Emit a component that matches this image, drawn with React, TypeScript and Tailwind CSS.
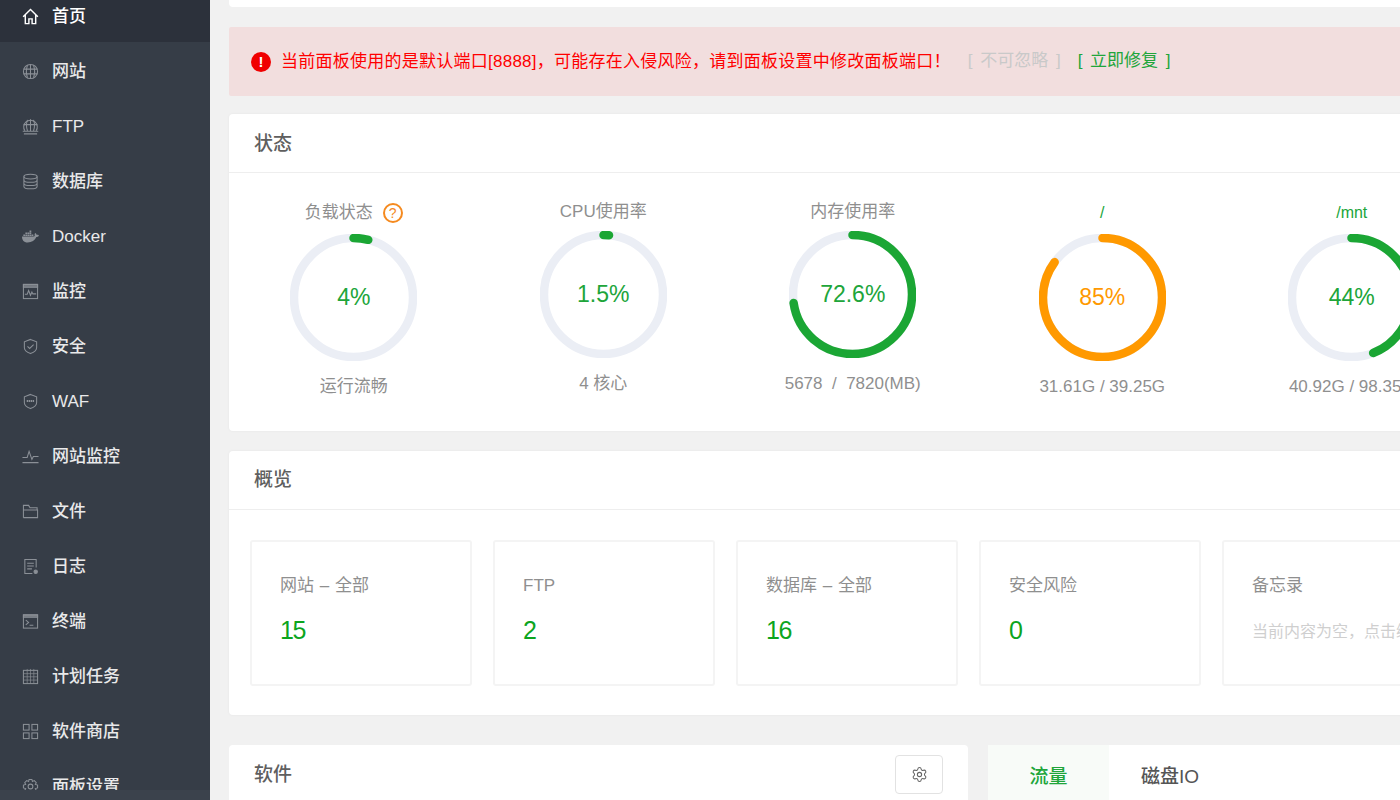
import { Settings } from "lucide-react";
import { FaDocker } from "react-icons/fa";
import type { ReactNode } from "react";

const Ico = ({ children }: { children: ReactNode }) => (
  <svg viewBox="0 0 18 18" fill="none" stroke="currentColor" strokeWidth="1.1" className="w-[17px] h-[17px] shrink-0">
    {children}
  </svg>
);

const navItems: { label: string; icon: ReactNode; active?: boolean }[] = [
  {
    label: "首页",
    active: true,
    icon: <path strokeWidth="1.5" d="M1.200 9.200 9 1.500l7.800 7.700M3.500 7.500V16.500h3.800v-5h3.400v5h3.800V7.500" />,
  },
  {
    label: "网站",
    icon: (
      <>
        <circle cx="9" cy="9" r="7.500" />
        <path d="M1.500 6.500h15M1.500 11.500h15M9 1.500v15M5.800 2.500c-1.500 4-1.500 9 0 13M12.200 2.500c1.500 4 1.500 9 0 13" />
      </>
    ),
  },
  {
    label: "FTP",
    icon: (
      <>
        <path d="M3 13.500a7.200 7.200 0 1 1 12 0" />
        <path d="M1.800 7h14.400M9 1.200v12.300M5.800 2c-1.300 3.500-1.300 8 0 11.500M12.200 2c1.300 3.500 1.300 8 0 11.500M.8 14h16.400M2 16.800h14" />
      </>
    ),
  },
  {
    label: "数据库",
    icon: (
      <>
        <ellipse cx="9" cy="3.800" rx="7" ry="2.500" />
        <path d="M2 3.800v10.400c0 1.400 3.100 2.500 7 2.500s7-1.100 7-2.500V3.800M2 7.300c0 1.400 3.100 2.500 7 2.500s7-1.100 7-2.500M2 10.800c0 1.400 3.100 2.500 7 2.500s7-1.100 7-2.500" />
      </>
    ),
  },
  { label: "Docker", icon: <FaDocker className="w-[17px] h-[17px] shrink-0" /> },
  {
    label: "监控",
    icon: (
      <>
        <rect x="1.500" y="1.500" width="15" height="15" />
        <rect x="1.500" y="1.500" width="15" height="3" fill="currentColor" fillOpacity=".7" />
        <path d="M3 12h2.500l1.500-4 2 5 1.500-3.500 1 2H15" />
      </>
    ),
  },
  {
    label: "安全",
    icon: (
      <>
        <path d="M9 1.500 15.500 4v6c0 3-3 5.200-6.500 6.500C5.500 15.200 2.500 13 2.500 10V4z" />
        <path d="m5.800 8.800 2.300 2.300 4.200-4" />
      </>
    ),
  },
  {
    label: "WAF",
    icon: (
      <>
        <path d="M9 1.500 15.500 4v6c0 3-3 5.200-6.500 6.500C5.500 15.200 2.500 13 2.500 10V4z" />
        <path d="M5 8.500h8" strokeWidth="2.200" strokeDasharray="1.500 .6" />
      </>
    ),
  },
  {
    label: "网站监控",
    icon: <path d="M.5 10h5l2-6.500 3 8.500 1.500-3h5.500M.5 15.500h17" />,
  },
  {
    label: "文件",
    icon: <path d="M1.500 15.500V2.500h5.500l1.500 2.500h7.500v2.500M1.500 15.500h15V7.500h-15" />,
  },
  {
    label: "日志",
    icon: (
      <>
        <path d="M15 10V1.500H3v15h8" />
        <path d="M5.500 5.500h7M5.500 8.500h7M5.500 11.500h5" />
        <circle cx="14.500" cy="14.500" r="1.800" fill="currentColor" />
      </>
    ),
  },
  {
    label: "终端",
    icon: (
      <>
        <rect x="1.500" y="2" width="15" height="14" />
        <rect x="1.500" y="2" width="15" height="2.500" fill="currentColor" fillOpacity=".7" />
        <path d="m4 7.500 3 2.500-3 2.500M8 13h4" />
      </>
    ),
  },
  {
    label: "计划任务",
    icon: (
      <>
        <rect x="1.500" y="2.500" width="15" height="14" />
        <path d="M1.500 6h15M1.500 9.300h15M1.500 12.800h15M5.500 1v15.500M9 1v15.500M12.500 1v15.500" strokeWidth=".7" />
      </>
    ),
  },
  {
    label: "软件商店",
    icon: (
      <>
        <rect x="1.500" y="1.500" width="6" height="6" />
        <rect x="10.500" y="1.500" width="6" height="6" />
        <rect x="1.500" y="10.500" width="6" height="6" />
        <rect x="10.500" y="10.500" width="6" height="6" />
      </>
    ),
  },
  {
    label: "面板设置",
    icon: (
      <>
        <path d="M7.500 1.500h3l.5 2.200 2-.9 2.100 2.100-1 2 2.400.6v3l-2.400.6 1 2-2.100 2.100-2-1-.5 2.300h-3l-.5-2.300-2 1-2.100-2.100 1-2-2.400-.6v-3l2.400-.6-1-2L5 2.800l2 .9z" />
        <circle cx="9" cy="9" r="2.500" />
      </>
    ),
  },
];

const gauges = [
  { title: "负载状态", help: true, pct: 4, label: "4%", sub: "运行流畅", tall: true, green: true },
  { title: "CPU使用率", pct: 1.5, label: "1.5%", sub: "4 核心", green: true },
  { title: "内存使用率", pct: 72.6, label: "72.6%", sub: "5678  /  7820(MB)", green: true },
  { title: "/", pct: 85, label: "85%", sub: "31.61G / 39.25G", tall: true, link: true },
  { title: "/mnt", pct: 44, label: "44%", sub: "40.92G / 98.35G", tall: true, green: true, link: true },
];

const overview = [
  { label: "网站 – 全部", value: "15" },
  { label: "FTP", value: "2" },
  { label: "数据库 – 全部", value: "16" },
  { label: "安全风险", value: "0" },
  { label: "备忘录", note: "当前内容为空，点击编辑" },
];

const Gauge = ({ g }: { g: (typeof gauges)[number] }) => {
  const r = 59.5;
  const c = 2 * Math.PI * r;
  return (
    <div className="flex flex-col items-center">
      <div
        className={`flex items-center gap-[10px] ${g.tall ? "h-[27px] pt-[1px]" : "h-[24px] pt-[2px]"} ${
          g.link ? "text-[#20a53a] text-[16px]" : "text-[#8f8f8f] text-[17px]"
        }`}
      >
        {g.title}
        {g.help && (
          <span className="w-[20px] h-[20px] rounded-full border-2 border-[#f58a1f] text-[#f58a1f] text-[14px] leading-none flex items-center justify-center">
            ?
          </span>
        )}
      </div>
      <div className="relative w-[127px] h-[127px] mt-[8px]">
        <svg viewBox="0 0 127 127" className="w-[127px] h-[127px] -rotate-90">
          <circle cx="63.500" cy="63.500" r={r} fill="none" stroke="#ebeef5" strokeWidth="8.500" />
          <circle
            cx="63.500"
            cy="63.500"
            r={r}
            fill="none"
            stroke={g.green ? "#1ba634" : "#ff9900"}
            strokeWidth="8.500"
            strokeLinecap="round"
            strokeDasharray={`${(c * g.pct) / 100} ${c}`}
          />
        </svg>
        <div className={`absolute inset-0 flex items-center justify-center text-[23px] ${g.green ? "text-[#20a53a]" : "text-[#ff9900]"}`}>
          {g.label}
        </div>
      </div>
      <div className="mt-[13px] h-[24px] text-[17px] text-[#8f8f8f] whitespace-pre">{g.sub}</div>
    </div>
  );
};

export default function App() {
  return (
    <div
      className="flex w-[1400px] h-[800px] overflow-hidden bg-[#f1f1f1]"
      style={{ fontFamily: '"Liberation Sans", "Noto Sans CJK SC", sans-serif' }}
    >
      <aside className="relative w-[210px] h-[800px] shrink-0 overflow-hidden bg-[#363d47]">
        <nav className="-mt-[13px]">
          {navItems.map((item) => (
            <div
              key={item.label}
              className={`flex items-center gap-[13px] h-[55px] pt-[4px] pl-[22px] text-[17px] font-medium ${
                item.active ? "bg-[#2c313b] text-white" : "text-[#e9e9ea]"
              }`}
            >
              <span className={item.active ? "text-white" : "text-[#8b9097]"}>
                {item.label === "Docker" ? item.icon : <Ico>{item.icon}</Ico>}
              </span>
              {item.label}
            </div>
          ))}
        </nav>
        <div className="absolute left-0 right-0 bottom-0 h-[10px] bg-[#3b424c]" />
      </aside>

      <main className="w-[1190px] shrink-0 pl-[19px]">
        <div className="w-[1300px]">
          <div className="h-[7px] bg-white rounded-b-[4px]" />

          <div className="mt-[20px] h-[69px] bg-[#f2dede] flex items-center pl-[22px] text-[17px] rounded-[2px]">
            <span className="w-[20px] h-[20px] rounded-full bg-[#f00000] text-white font-bold text-[15px] leading-none flex items-center justify-center">
              !
            </span>
            <span className="ml-[10px] text-[#ff0000] tracking-[0.25px]">当前面板使用的是默认端口[8888]，可能存在入侵风险，请到面板设置中修改面板端口！</span>
            <span className="ml-[17px] -mt-[1px] text-[#c9c9c9] whitespace-pre [word-spacing:3px]">[ 不可忽略 ]</span>
            <span className="ml-[17px] -mt-[1px] text-[#20a53a] whitespace-pre [word-spacing:3px]">[ 立即修复 ]</span>
          </div>

          <section className="mt-[18px] h-[317px] bg-white rounded-[4px] shadow-[0_0_3px_rgba(0,0,0,0.05)]">
            <h2 className="h-[59px] pt-[2px] pl-[25px] flex items-center text-[19px] font-medium text-[#5f5f5f] border-b border-[#eeeeee]">
              状态
            </h2>
            <div className="grid grid-cols-[repeat(5,249.5px)] pt-[26px]">
              {gauges.map((g) => (
                <Gauge key={g.title} g={g} />
              ))}
            </div>
          </section>

          <section className="mt-[20px] h-[264px] bg-white rounded-[4px] shadow-[0_0_3px_rgba(0,0,0,0.05)]">
            <h2 className="h-[59px] pl-[25px] flex items-center text-[19px] font-medium text-[#5f5f5f] border-b border-[#eeeeee]">
              概览
            </h2>
            <div className="flex gap-[21px] pl-[21px] pt-[30px]">
              {overview.map((o) => (
                <div
                  key={o.label}
                  className="w-[222px] h-[146px] shrink-0 border-2 border-[#f4f4f4] rounded-[3px] pl-[28px] pt-[32px]"
                >
                  <div className="text-[17px] leading-[24px] text-[#8f8f8f] whitespace-nowrap [word-spacing:1px]">{o.label}</div>
                  {o.value ? (
                    <div className="mt-[17px] text-[25px] leading-[30px] tracking-[-1.5px] text-[#0ca51e]">{o.value}</div>
                  ) : (
                    <div className="mt-[22px] text-[16px] leading-[24px] text-[#cfcfcf] whitespace-nowrap">{o.note}</div>
                  )}
                </div>
              ))}
            </div>
          </section>

          <div className="mt-[30px] flex gap-[20px]">
            <section className="w-[739px] h-[100px] bg-white rounded-[4px] flex justify-between pl-[25px] pr-[25px] pt-[10px]">
              <h2 className="h-[40px] flex items-center text-[19px] font-medium text-[#5f5f5f]">软件</h2>
              <button className="w-[48px] h-[39px] border border-[#e2e2e2] rounded-[4px] flex items-center justify-center text-[#666]">
                <Settings size={17} strokeWidth={1.5} />
              </button>
            </section>
            <section className="w-[500px] h-[100px] bg-white rounded-[4px] flex">
              <div className="w-[121px] h-[100px] bg-[#f8fbf8] text-[#20a53a] text-[19px] font-medium flex justify-center pt-[18px]">
                流量
              </div>
              <div className="w-[122px] text-[#555] text-[19px] font-medium flex justify-center pt-[18px]">
                磁盘IO
              </div>
            </section>
          </div>
        </div>
      </main>
    </div>
  );
}
